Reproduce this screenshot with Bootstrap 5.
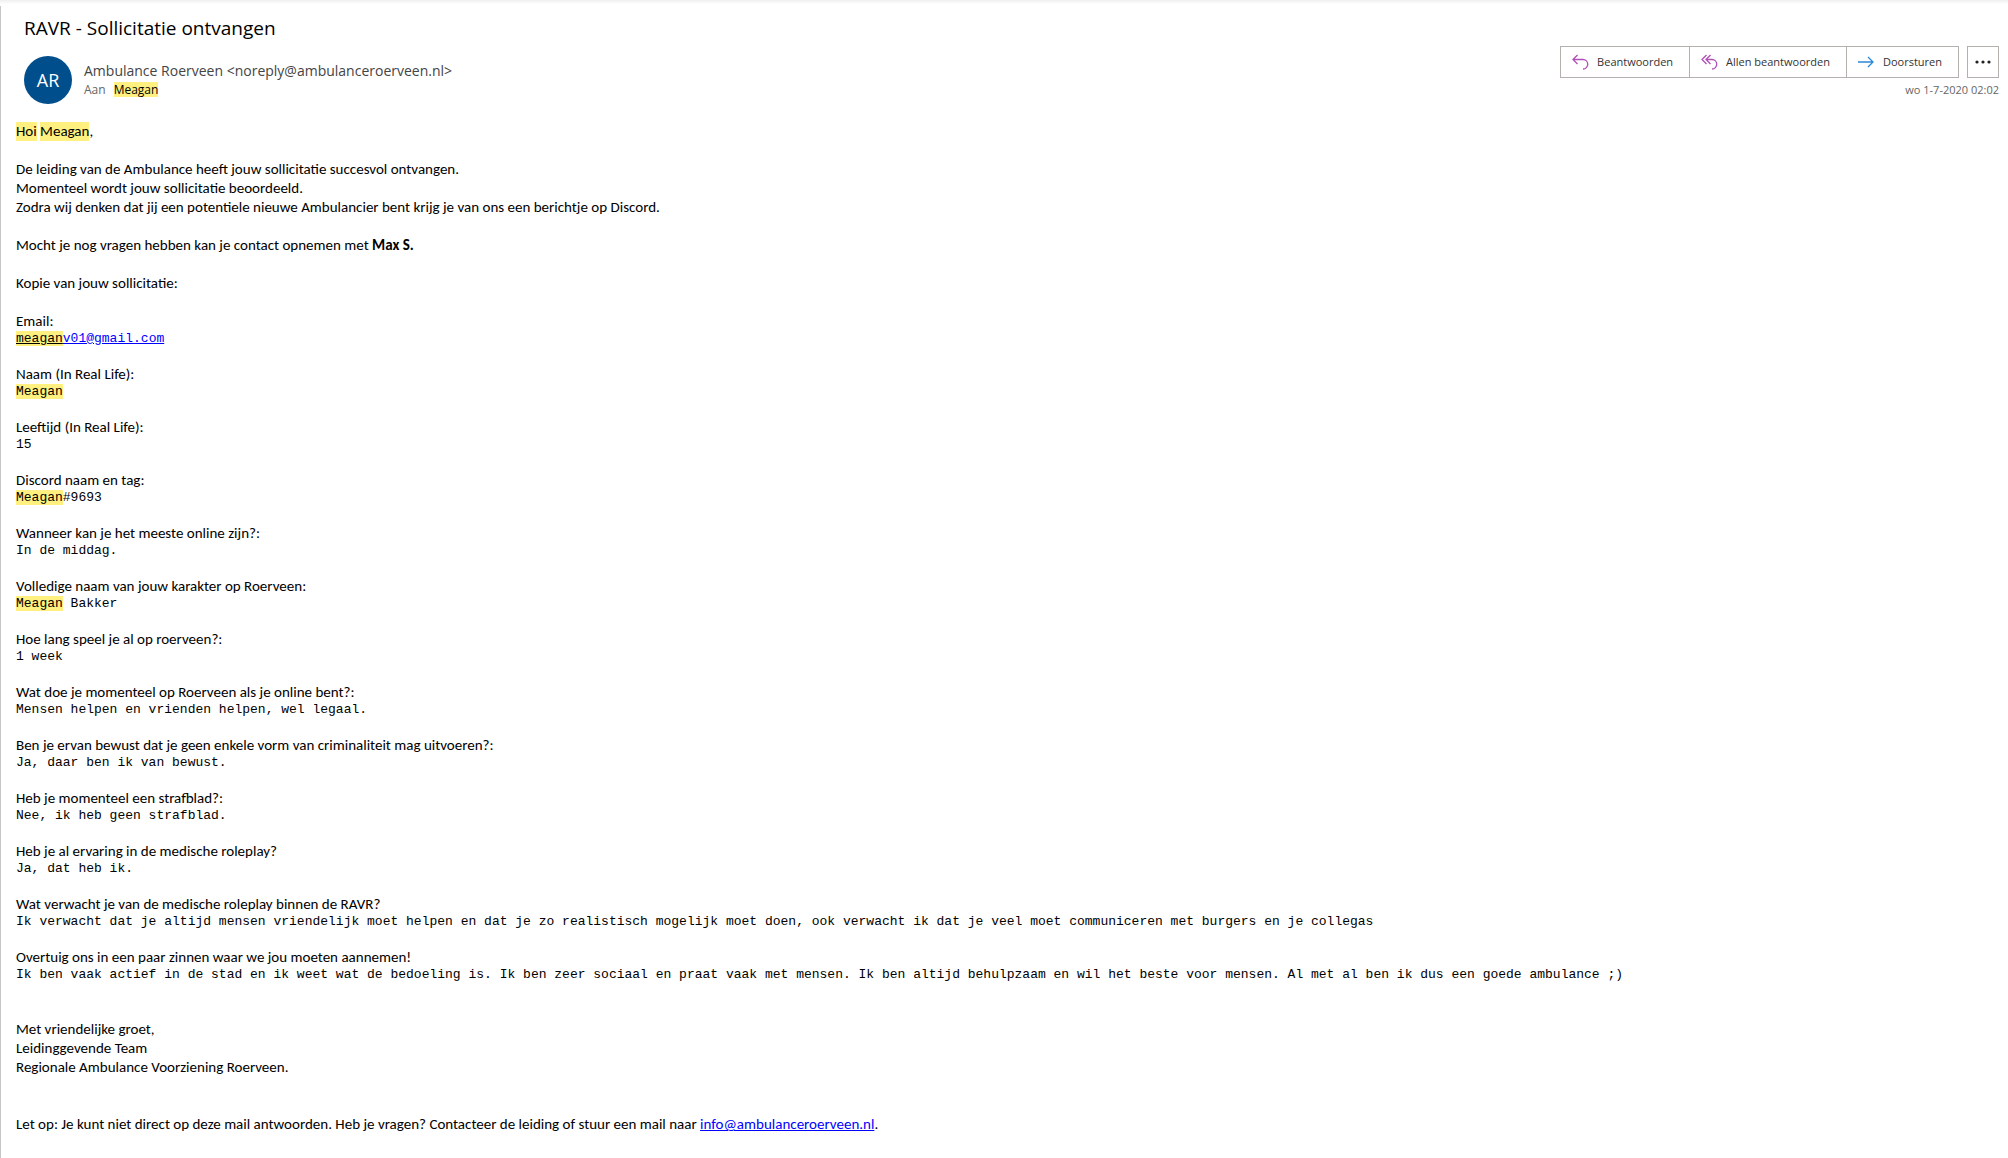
<!DOCTYPE html>
<html lang="nl">
<head>
<meta charset="utf-8">
<meta name="viewport" content="width=device-width, initial-scale=1">
<title>RAVR - Sollicitatie ontvangen</title>
<link href="https://cdn.jsdelivr.net/npm/bootstrap@5.3.0/dist/css/bootstrap.min.css" rel="stylesheet">
<style>
body { font-family: "Segoe UI", "Open Sans", "Noto Sans", sans-serif; color: #000; background: #fff; }
.top-shade { height: 6px; background: linear-gradient(#efefef, #fff 4px); }
.mail-pane { border-left: 1px solid #c8c6c4; min-height: calc(100vh - 6px); }
.mail-head { padding: 8px 9px 18px 23px; }
.subject { font-size: 19px; line-height: 28px; margin-bottom: 14px; }
.avatar { width: 48px; height: 48px; background: #004e8c; color: #fff; font-size: 18px; }
.sender { font-size: 14px; line-height: 22px; color: #444; }
.recipient { font-size: 12px; line-height: 15px; color: #666; }
.hit { background: #fff080; color: #000; display: inline-block; }
.act { font-size: 11px; line-height: 16px; height: 32px; padding: 0 16px 0 11px; color: #333; border-color: #b3b0ad; --bs-btn-hover-bg: #f3f2f1; --bs-btn-hover-color: #333; }
.act-more { width: 32px; padding: 0; }
.sent-at { font-size: 11px; line-height: 16px; color: #666; }
.mail-text { font-family: Calibri, Carlito, Lato, sans-serif; font-size: 15px; line-height: 19px; padding: 0 15px; }
.mail-text p, .mail-text dd { margin-bottom: 19px; }
.mail-text dt { font-weight: 400; }
.mail-text dd { font-family: "Liberation Mono", monospace; font-size: 13px; line-height: 15px; }
.mail-text a { color: #00f; }
.mail-text p.wide-after, .mail-text .answers { margin-bottom: 38px; }
</style>
<script defer src="https://cdn.jsdelivr.net/npm/bootstrap@5.3.0/dist/js/bootstrap.bundle.min.js"></script>
</head>
<body>
<div class="top-shade"></div>
<main class="mail-pane">
  <header class="mail-head d-flex justify-content-between">
    <div>
      <h1 class="subject fw-normal">RAVR - Sollicitatie ontvangen</h1>
      <div class="d-flex">
        <div class="avatar rounded-circle d-flex align-items-center justify-content-center">AR</div>
        <div class="ps-2 ms-1 pt-1">
          <div class="sender">Ambulance Roerveen &lt;noreply@ambulanceroerveen.nl&gt;</div>
          <div class="recipient d-flex gap-2">Aan <span class="hit">Meagan</span></div>
        </div>
      </div>
    </div>
    <div class="pt-4 mt-2">
      <div class="d-flex gap-2">
        <div class="btn-group" role="group" aria-label="Acties">
          <button type="button" class="btn act rounded-0 d-flex align-items-center gap-2">
            <svg width="17" height="16" viewBox="0 0 17 16" fill="none" stroke="#b04fb8" stroke-width="1.3" aria-hidden="true"><path d="M5.5 1 1 5.5 5.5 10M1 5.5h10a4.700 4.700 0 0 1 0 9.500"/></svg>
            Beantwoorden</button>
          <button type="button" class="btn act rounded-0 d-flex align-items-center gap-2">
            <svg width="17" height="16" viewBox="0 0 17 16" fill="none" stroke="#b04fb8" stroke-width="1.3" aria-hidden="true"><path d="M5.500 1 1 5.500 5.500 10M9.500 1 5 5.500 9.500 10M5 5.500h6a4.700 4.700 0 0 1 0 9.500"/></svg>
            Allen beantwoorden</button>
          <button type="button" class="btn act rounded-0 d-flex align-items-center gap-2">
            <svg width="17" height="16" viewBox="0 0 17 16" fill="none" stroke="#2b88d8" stroke-width="1.3" aria-hidden="true"><path d="M0 8h15M10 3l5 5-5 5"/></svg>
            Doorsturen</button>
        </div>
        <button type="button" class="btn act act-more rounded-0 d-flex align-items-center justify-content-center" aria-label="Meer acties">
          <svg width="16" height="4" viewBox="0 0 16 4" fill="#222" aria-hidden="true"><circle cx="2" cy="2" r="1.600"/><circle cx="8" cy="2" r="1.600"/><circle cx="14" cy="2" r="1.600"/></svg>
        </button>
      </div>
      <div class="sent-at text-end mt-1">wo 1-7-2020 02:02</div>
    </div>
  </header>

  <article class="mail-text">
    <p><span class="hit">Hoi</span> <span class="hit">Meagan</span>,</p>
    <p>De leiding van de Ambulance heeft jouw sollicitatie succesvol ontvangen.<br>
      Momenteel wordt jouw sollicitatie beoordeeld.<br>
      Zodra wij denken dat jij een potentiele nieuwe Ambulancier bent krijg je van ons een berichtje op Discord.</p>
    <p>Mocht je nog vragen hebben kan je contact opnemen met <strong>Max S.</strong></p>
    <p>Kopie van jouw sollicitatie:</p>
    <dl class="answers">
      <dt>Email:</dt><dd><a href="mailto:meaganv01@gmail.com"><span class="hit text-decoration-underline">meagan</span>v01@gmail.com</a></dd>
      <dt>Naam (In Real Life):</dt><dd><span class="hit">Meagan</span></dd>
      <dt>Leeftijd (In Real Life):</dt><dd>15</dd>
      <dt>Discord naam en tag:</dt><dd><span class="hit">Meagan</span>#9693</dd>
      <dt>Wanneer kan je het meeste online zijn?:</dt><dd>In de middag.</dd>
      <dt>Volledige naam van jouw karakter op Roerveen:</dt><dd><span class="hit">Meagan</span> Bakker</dd>
      <dt>Hoe lang speel je al op roerveen?:</dt><dd>1 week</dd>
      <dt>Wat doe je momenteel op Roerveen als je online bent?:</dt><dd>Mensen helpen en vrienden helpen, wel legaal.</dd>
      <dt>Ben je ervan bewust dat je geen enkele vorm van criminaliteit mag uitvoeren?:</dt><dd>Ja, daar ben ik van bewust.</dd>
      <dt>Heb je momenteel een strafblad?:</dt><dd>Nee, ik heb geen strafblad.</dd>
      <dt>Heb je al ervaring in de medische roleplay?</dt><dd>Ja, dat heb ik.</dd>
      <dt>Wat verwacht je van de medische roleplay binnen de RAVR?</dt><dd>Ik verwacht dat je altijd mensen vriendelijk moet helpen en dat je zo realistisch mogelijk moet doen, ook verwacht ik dat je veel moet communiceren met burgers en je collegas</dd>
      <dt>Overtuig ons in een paar zinnen waar we jou moeten aannemen!</dt><dd>Ik ben vaak actief in de stad en ik weet wat de bedoeling is. Ik ben zeer sociaal en praat vaak met mensen. Ik ben altijd behulpzaam en wil het beste voor mensen. Al met al ben ik dus een goede ambulance ;)</dd>
    </dl>
    <p class="wide-after">Met vriendelijke groet,<br>Leidinggevende Team<br>Regionale Ambulance Voorziening Roerveen.</p>
    <p class="mb-0">Let op: Je kunt niet direct op deze mail antwoorden. Heb je vragen? Contacteer de leiding of stuur een mail naar <a href="mailto:info@ambulanceroerveen.nl">info@ambulanceroerveen.nl</a>.</p>
  </article>
</main>
</body>
</html>
